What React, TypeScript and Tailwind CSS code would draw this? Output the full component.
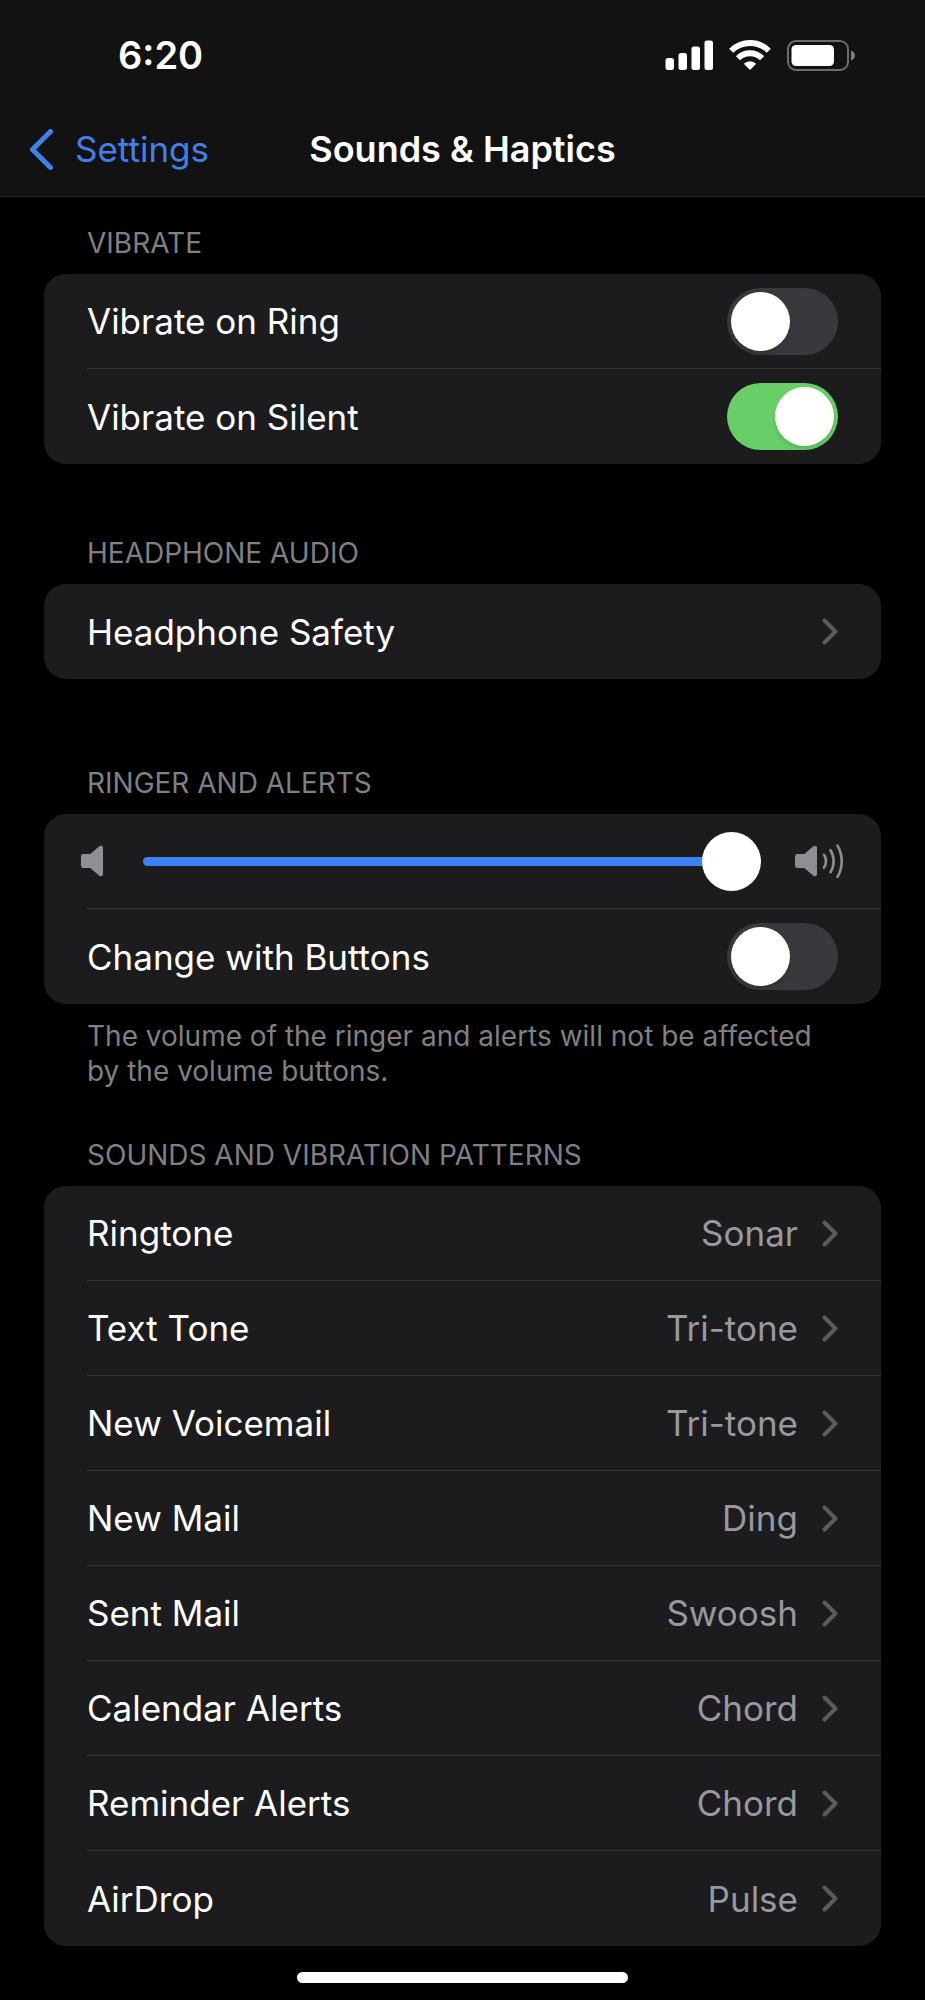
import { Children, useState } from "react";
import type { ReactNode } from "react";

const patterns = [
  { label: "Ringtone", value: "Sonar" },
  { label: "Text Tone", value: "Tri-tone" },
  { label: "New Voicemail", value: "Tri-tone" },
  { label: "New Mail", value: "Ding" },
  { label: "Sent Mail", value: "Swoosh" },
  { label: "Calendar Alerts", value: "Chord" },
  { label: "Reminder Alerts", value: "Chord" },
  { label: "AirDrop", value: "Pulse" },
];

const StatusIcons = () => (
  <div className="flex items-center gap-4">
    <svg width="48" height="30" viewBox="0 0 48 30" fill="#fff" aria-hidden="true">
      <rect x="0.500" y="18" width="8.500" height="12" rx="2.500" />
      <rect x="13.500" y="13" width="8.500" height="17" rx="2.500" />
      <rect x="26.500" y="6.500" width="8.500" height="23.500" rx="2.500" />
      <rect x="39.500" y="0.500" width="8.500" height="29.500" rx="2.500" />
    </svg>
    <svg width="42" height="30" viewBox="0 0 42 30" aria-hidden="true">
      <g fill="none" stroke="#fff" strokeWidth="5.800">
        <path d="M2.200 10.800a26.600 26.600 0 0 1 37.600 0" />
        <path d="M9 18.200a17 17 0 0 1 24 0" />
      </g>
      <path d="M21 30l-6.200-6.300a8.800 8.800 0 0 1 12.400 0z" fill="#fff" />
    </svg>
    <svg width="68" height="31" viewBox="0 0 68 31" aria-hidden="true">
      <rect x="1" y="1" width="60" height="29" rx="8" fill="none" stroke="#6c6c6c" strokeWidth="2" />
      <rect x="4.500" y="5" width="42.500" height="21" rx="4.500" fill="#fff" />
      <path d="M64 10.500c2.400.8 4 2.700 4 5s-1.600 4.200-4 5z" fill="#7c7c7c" />
    </svg>
  </div>
);

const Chevron = () => (
  <svg width="16" height="27" viewBox="0 0 16 27" fill="none" stroke="#5b5b5f" strokeWidth="4" strokeLinecap="round" strokeLinejoin="round" aria-hidden="true">
    <path d="M2.500 2.500L13.500 13.500L2.500 24.500" />
  </svg>
);

const speakerPath = "M2.500 9.500h6.700L18.300 1.400c1.500-1.300 3.700-.6 3.700 1.400v28.400c0 2-2.200 2.700-3.700 1.400L9.200 24.500H2.500A2.500 2.500 0 0 1 0 22V12A2.500 2.500 0 0 1 2.500 9.500z";

const Section = ({ title, footer, children }: { title: string; footer?: string; children: ReactNode }) => {
  const rows = Children.toArray(children);

  return (
    <section className="px-11">
      <h2 className="mb-[13px] pl-[43px] text-[28px] leading-9 text-[#7f7f84] uppercase">{title}</h2>
      <ul className="rounded-[22px] bg-[#1c1c1e]">
        {rows.map((row, i) => (
          <li key={i} className="flex h-[95px] flex-col">
            <div className="flex flex-1">{row}</div>
            {i < rows.length - 1 && <hr className="ml-[43px] border-[#333336]" />}
          </li>
        ))}
      </ul>
      {footer && <p className="mt-[15px] px-[43px] text-[28px] leading-[35px] text-[#7f7f84]">{footer}</p>}
    </section>
  );
};

const ToggleRow = ({ id, label, defaultChecked }: { id: string; label: string; defaultChecked?: boolean }) => {
  const [checked, setChecked] = useState(!!defaultChecked);

  return (
    <div className="flex flex-1 items-center justify-between px-[43px]">
      <label htmlFor={id}>{label}</label>
      <input
        id={id}
        type="checkbox"
        role="switch"
        checked={checked}
        onChange={(e) => setChecked(e.target.checked)}
        className="flex h-[67px] w-[111px] appearance-none items-center rounded-full bg-[#39393d] px-1 before:size-[59px] before:rounded-full before:bg-white before:shadow-md before:transition-transform checked:bg-[#68ce67] checked:before:translate-x-11"
      />
    </div>
  );
};

const LinkRow = ({ label, value }: { label: string; value?: string }) => (
  <button type="button" className="flex flex-1 items-center gap-6 px-[43px] text-left">
    <span className="flex-1">{label}</span>
    {value && <span className="text-[#98989f]">{value}</span>}
    <Chevron />
  </button>
);

const VolumeRow = () => {
  const [volume, setVolume] = useState(100);

  return (
    <div className="flex flex-1 items-center gap-[34px] px-[37px]">
      <svg width="28" height="32" viewBox="0 0 28 32" fill="#8e8e93" aria-hidden="true">
        <path d={speakerPath} transform="scale(1 .94)" />
      </svg>
      <input
        type="range"
        aria-label="Ringer and alerts volume"
        value={volume}
        onChange={(e) => setVolume(Number(e.target.value))}
        style={{ backgroundImage: `linear-gradient(to right, #3c82f6 ${volume}%, #39393d ${volume}%)` }}
        className="h-[9px] min-w-0 flex-1 appearance-none rounded-full [&::-webkit-slider-thumb]:size-[59px] [&::-webkit-slider-thumb]:appearance-none [&::-webkit-slider-thumb]:rounded-full [&::-webkit-slider-thumb]:bg-white"
      />
      <svg width="49" height="34" viewBox="0 0 49 34" fill="#8e8e93" aria-hidden="true">
        <path d={speakerPath} transform="translate(0 1) scale(1 .94)" />
        <g fill="none" stroke="#8e8e93" strokeWidth="2.600" strokeLinecap="round">
          <path d="M29 10.800a12 12 0 0 1 0 12.800" />
          <path d="M35.500 6.200a21 21 0 0 1 0 22" />
          <path d="M42.500 1.600a31 31 0 0 1 0 31.200" />
        </g>
      </svg>
    </div>
  );
};

const App = () => {
  return (
    <div className="min-h-screen bg-black font-['Inter',sans-serif] text-[35px] leading-[44px] text-white">
      <header className="border-b border-[#262626] bg-[#121212] pb-2">
        <div className="flex h-[110px] items-center justify-between pr-[70px] pl-[118px]">
          <time className="text-[38px] font-semibold">6:20</time>
          <StatusIcons />
        </div>
        <nav className="grid h-[78px] grid-cols-[1fr_auto_1fr] items-center px-[29px]">
          <a href="#settings" className="flex items-center gap-[22px] text-[#4080ea]">
            <svg width="24" height="41" viewBox="0 0 24 41" fill="none" stroke="#4080ea" strokeWidth="5" strokeLinecap="round" strokeLinejoin="round" aria-hidden="true">
              <path d="M21.500 2.500L3.500 20.500L21.500 38.500" />
            </svg>
            Settings
          </a>
          <h1 className="text-[36px] font-semibold">Sounds &amp; Haptics</h1>
        </nav>
      </header>

      <main className="pt-7">
        <Section title="Vibrate">
          <ToggleRow id="vibrate-ring" label="Vibrate on Ring" />
          <ToggleRow id="vibrate-silent" label="Vibrate on Silent" defaultChecked />
        </Section>

        <div className="mt-[71px]">
          <Section title="Headphone Audio">
            <LinkRow label="Headphone Safety" />
          </Section>
        </div>

        <div className="mt-[86px]">
          <Section title="Ringer and Alerts" footer="The volume of the ringer and alerts will not be affected by the volume buttons.">
            <VolumeRow />
            <ToggleRow id="change-buttons" label="Change with Buttons" />
          </Section>
        </div>

        <div className="mt-12">
          <Section title="Sounds and Vibration Patterns">
            {patterns.map((p) => (
              <LinkRow key={p.label} label={p.label} value={p.value} />
            ))}
          </Section>
        </div>
      </main>

      {/* home indicator */}
      <div className="flex justify-center pt-[26px] pb-[17px]">
        <div className="h-[11px] w-[331px] rounded-full bg-white" />
      </div>
    </div>
  );
};

export default App;
